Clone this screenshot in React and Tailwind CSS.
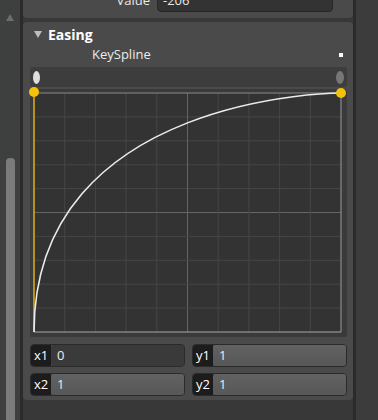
import React from 'react';

const font = { fontFamily: '"Open Sans", "Noto Sans", "DejaVu Sans", sans-serif' };

const W = 307;
const H = 239;
const OX = 4;
const OY = 4;

const Chart = () => {
    const lines = [];
    for (let i = 1; i < 10; i++) {
        const x = OX + (W / 10) * i;
        const y = OY + (H / 10) * i;
        const c = i === 5 ? '#656565' : '#464646';
        lines.push(<line key={`v${i}`} x1={x} y1={OY} x2={x} y2={OY + H} stroke={c} strokeWidth="1" />);
        lines.push(<line key={`h${i}`} x1={OX} y1={y} x2={OX + W} y2={y} stroke={c} strokeWidth="1" />);
    }
    return (
        <svg width="317" height="248" className="block overflow-visible">
            <rect x={OX} y={OY} width={W} height={H} fill="#333333" />
            {lines}
            <line x1={OX} y1={OY} x2={OX + W} y2={OY} stroke="#8a8a8a" strokeWidth="1" />
            <line x1={OX + W} y1={OY} x2={OX + W} y2={OY + H} stroke="#9a9a9a" strokeWidth="1" />
            <line x1={OX} y1={OY + H} x2={OX + W} y2={OY + H} stroke="#a8a8a8" strokeWidth="1.2" />
            <line x1={OX} y1={OY + H} x2={OX} y2={OY} stroke="#d2ad12" strokeWidth="1.6" />
            <path
                d={`M ${OX} ${OY + H} C ${OX} ${OY}, ${OX + W} ${OY}, ${OX + W} ${OY}`}
                fill="none"
                stroke="#ececec"
                strokeWidth="1.6"
            />
            <circle cx={OX} cy={OY - 1} r="5" fill="#f4c20d" />
            <circle cx={OX + W} cy={OY} r="5" fill="#f4c20d" />
        </svg>
    );
};

const Field = ({ label, value, focused }) => (
    <div className="flex h-[23px] rounded-[4px] border border-[#2a2a2a] overflow-hidden">
        <div className="w-[20px] bg-[#1c1c1c] text-white text-[13px] flex items-center justify-center leading-none">
            {label}
        </div>
        <div
            className={`flex-1 flex items-center pl-[6px] text-[13px] text-[#eeeeee] leading-none rounded-l-[3px] ${
                focused ? 'bg-[#3a3a3a]' : 'bg-gradient-to-b from-[#626262] to-[#575757]'
            }`}
        >
            {value}
        </div>
    </div>
);

export default function App() {
    return (
        <div className="w-[378px] h-[420px] flex bg-[#383838] overflow-hidden" style={font}>
            {/* left scroll column */}
            <div className="w-[20px] bg-[#3e4040] flex flex-col items-center">
                <div className="mt-[14px] w-0 h-0 border-l-[4px] border-r-[4px] border-b-[7px] border-l-transparent border-r-transparent border-b-[#6c6c6c]" />
                <div className="flex-1" />
                <div className="w-[9px] h-[262px] rounded-t-[4px] bg-[#7b7b7b]" />
            </div>
            <div className="w-[3px] bg-[#2b2b2b]" />

            {/* middle */}
            <div className="w-[330px] flex flex-col">
                <div className="h-[18px] bg-[#4a4a4a] rounded-b-[4px] relative overflow-hidden">
                    <div className="flex items-center h-[22px] -mt-[10px]">
                        <div className="w-[127px] text-right text-[13px] text-[#e8e8e8]">Value</div>
                        <div className="ml-[7px] w-[176px] h-[22px] rounded-[4px] bg-[#333333] border border-[#262626] flex items-center pl-[5px] text-[13px] text-[#e8e8e8]">
                            -206
                        </div>
                    </div>
                </div>
                <div className="h-[4px]" />
                <div className="h-[378px] bg-[#4a4a4a] rounded-[4px] flex flex-col">
                    <div className="flex items-center h-[22px] mt-[1px] pl-[11px]">
                        <div className="w-0 h-0 border-l-[4px] border-r-[4px] border-t-[7px] border-l-transparent border-r-transparent border-t-[#bdbdbd]" />
                        <span className="ml-[6px] text-[14px] font-bold text-white">Easing</span>
                    </div>
                    <div className="flex items-center h-[18px] mt-[1px]">
                        <span className="ml-[69px] text-[13px] text-[#ececec]">KeySpline</span>
                        <div className="flex-1" />
                        <div className="w-[4px] h-[4px] bg-white mr-[10px]" />
                    </div>
                    <div className="mt-[3px] ml-[7px] w-[317px] h-[20px] rounded-[3px] bg-[#3d3d3d] flex items-center justify-between px-[3px]">
                        <div className="w-[7px] h-[13px] rounded-[50%] bg-[#dedede]" />
                        <div className="w-[8px] h-[13px] rounded-[50%] bg-[#777777]" />
                    </div>
                    <div className="mt-[2px] ml-[7px] w-[317px] h-[248px] bg-[#3a3a3a] rounded-[2px]">
                        <Chart />
                    </div>
                    <div className="mt-[7px] pl-[7px] pr-[6px] grid grid-cols-2 gap-x-[7px] gap-y-[6px]">
                        <Field label="x1" value="0" focused />
                        <Field label="y1" value="1" />
                        <Field label="x2" value="1" />
                        <Field label="y2" value="1" />
                    </div>
                </div>
            </div>

            <div className="w-[3px] bg-[#2b2b2b]" />
            <div className="flex-1 bg-[#3c3c3c]" />
        </div>
    );
}
